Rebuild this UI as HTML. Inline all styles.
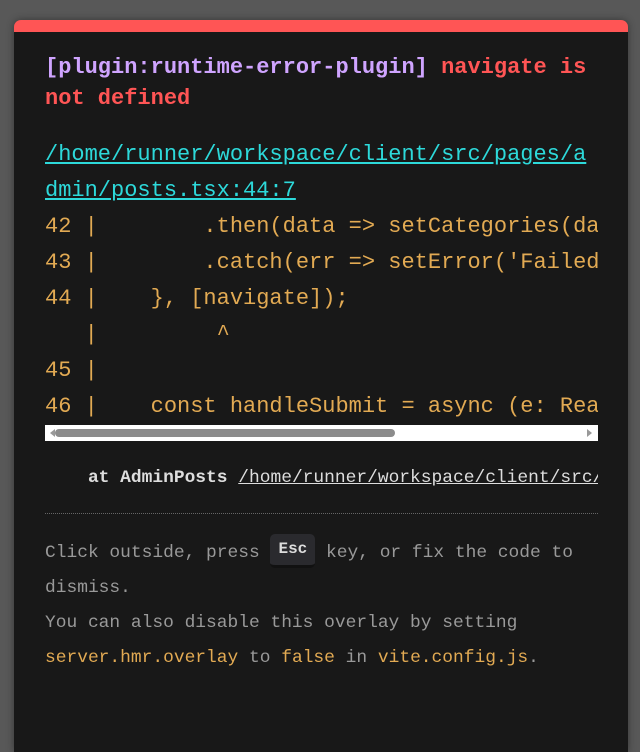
<!DOCTYPE html>
<html><head><meta charset="utf-8"><style>
html,body{margin:0;padding:0;width:640px;height:685px;overflow:hidden;background:#585858;}
body{font-family:"Liberation Mono",monospace;}
.card{position:absolute;left:14px;top:20px;width:614px;height:720px;background:#181818;border-top:12px solid #ff5555;border-radius:7px 7px 0 0;box-shadow:0 0 8px rgba(0,0,0,.4);}
.in{position:absolute;left:31px;top:0;width:553px;}
.title{margin-top:20px;font-size:22px;line-height:31px;font-weight:bold;color:#ff5555;white-space:pre-wrap;word-break:break-all;}
.title .p{color:#cfa4ff;}
.file{margin-top:23px;font-size:22px;line-height:36px;color:#2dd9da;text-decoration:underline;word-break:break-all;}
pre{margin:0;font-family:inherit;font-size:22px;line-height:36px;color:#e2aa53;overflow:hidden;white-space:pre;}
.sb{position:relative;height:16px;background:#fff;}
.thumb{position:absolute;left:10px;top:4px;width:340px;height:8px;background:#8c8c8c;border-radius:4px;}
.al{position:absolute;left:5px;top:4px;width:0;height:0;border-top:4px solid transparent;border-bottom:4px solid transparent;border-right:5px solid #999;}
.ar{position:absolute;right:6px;top:4px;width:0;height:0;border-top:4px solid transparent;border-bottom:4px solid transparent;border-left:5px solid #999;}
.stack{margin-top:20px;font-size:17.9px;line-height:35px;color:#ddd;white-space:pre;overflow:hidden;font-weight:bold;}
.stack u{font-weight:normal;}
.hr{margin-top:17px;border-top:1px dotted #666;}
.tip{margin-top:22px;font-size:17.9px;line-height:35px;color:#999;}
.tip b{font-weight:normal;color:#e2aa53;}
kbd{display:inline-block;font-family:inherit;font-size:16px;font-weight:bold;line-height:31px;height:31px;padding:0 8px;background:#2a2a2e;color:#ddd;border-radius:5px;border-bottom:3px solid #111;vertical-align:middle;margin-top:-3px;}
</style></head><body>
<div class="card"><div class="in">
<div class="title"><span class="p">[plugin:runtime-error-plugin]</span> navigate is not defined</div>
<div class="file">/home/runner/workspace/client/src/pages/admin/posts.tsx:44:7</div>
<pre>42 |        .then(data =&gt; setCategories(data))
43 |        .catch(err =&gt; setError('Failed to load'))
44 |    }, [navigate]);
   |         ^
45 |
46 |    const handleSubmit = async (e: React.FormEvent) =&gt; {</pre>
<div class="sb"><div class="al"></div><div class="thumb"></div><div class="ar"></div></div>
<div class="stack">    at AdminPosts <u>/home/runner/workspace/client/src/pages/admin/posts.tsx</u></div>
<div class="hr"></div>
<div class="tip">Click outside, press <kbd>Esc</kbd> key, or fix the code to dismiss.<br>You can also disable this overlay by setting <b>server.hmr.overlay</b> to <b>false</b> in <b>vite.config.js</b>.</div>
</div></div>
</body></html>
